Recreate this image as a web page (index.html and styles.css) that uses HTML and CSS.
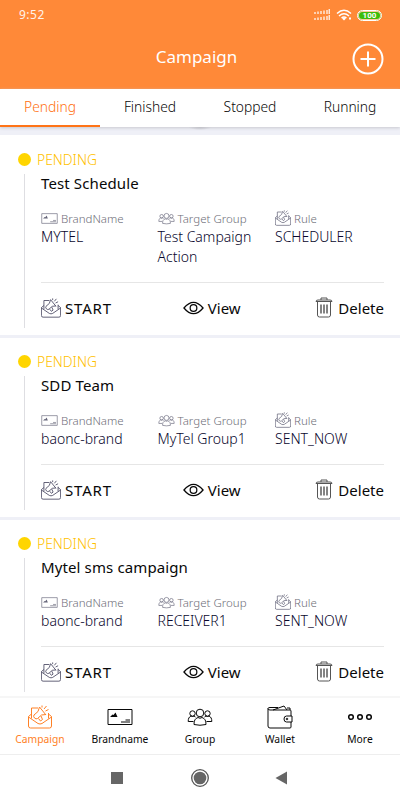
FILE: index.html
```html
<!DOCTYPE html>
<html lang="en">
<head>
<meta charset="utf-8">
<title>Campaign</title>
<link rel="stylesheet" href="styles.css">
</head>
<body>
<svg class="defs" aria-hidden="true">
  <symbol id="mail" viewBox="0 0 24 24"><path d="M3.500 9 .5 11.500V21q0 2 2 2h19q2 0 2-2v-9.500l-3-2.500M.5 12l9.500 6.500q2 1 4 0l9.500-6.500M3.500 13.500V3H10M20.500 13.500V8M11.500 2l6.500 8M11.500 2 10 6.500 6 10q-1 1.500.5 3t3 .5l4-3.500 4.500-.5M10.500 13.500l2 2.500 2-1.500-1.500-3.500M14 2.500V.5M16 4l2.500-3M17.500 6l3-1.500"/></symbol>
  <symbol id="brand" viewBox="0 0 26 17"><path d="M1 1h24v15H1zM14 13.500h9M18.500 11.500H23"/><path class="fill" d="m3 8.500 2.500-2.500 1 .5L8.500 4l2 4.500z"/></symbol>
  <symbol id="group" viewBox="0 0 26 20"><circle cx="13" cy="6" r="3.800"/><circle cx="5.500" cy="6.500" r="2.700"/><circle cx="20.500" cy="6.500" r="2.700"/><path d="M7 17.500c0-4 1-6 4-7q2 1.500 4 0c3 1 4 3 4 7q-6 1.500-12 0zM6.500 14.500H1.200c0-3 .8-4.500 2.800-5.500q1.500 1 3 0l1.500 1M19.500 14.500h5.300c0-3-.8-4.500-2.800-5.500q-1.500 1-3 0l-1.500 1"/></symbol>
  <symbol id="eye" viewBox="0 0 22 14"><path d="M1 7Q11-5 21 7 11 19 1 7z"/><circle cx="11" cy="7" r="3.500"/></symbol>
  <symbol id="trash" viewBox="0 0 18 21"><path class="can" d="M1 4.500Q1 3 3 3h12q2 0 2 1.500zM6 3V1h6v2M2.500 5v13q0 2 2 2h9q2 0 2-2V5"/><path d="M6 7.500v9M9 7.500v9M12 7.500v9"/></symbol>
  <symbol id="wallet" viewBox="0 0 26 24"><path d="M24 11V6q0-1-1-1H3Q1 5 1 3.500V21q0 2 2 2h20q1 0 1-1v-5M1 3.500Q1 2.500 3 2.500h8M6 5l11-4 3 4M20 3h3v2M25 11h-5.500q-2.500 0-2.500 3t2.500 3H25z"/><circle cx="20" cy="14" r=".8"/></symbol>
</svg>

<header class="header">
  <div class="status-bar">
    <span class="clock">9:52</span>
    <svg class="signal" viewBox="0 0 16 12"><path d="M1 3v2M4 2.500v2.500M7 2v3M10 1.500v3.500M13 1v4M15.300 0v5M1 9v2M4 8.500v2.500M7 8v3M10 7.500v3.500M13 7v4M15.300 6v5"/></svg>
    <svg class="wifi" viewBox="0 0 16 12"><path d="M1 4.500Q8-2 15 4.500M3 7q5-4.500 10 0M5.500 9q2.500-2 5 0"/><path class="fill" d="m6 9.500 2 2 2-2-2-1zM13 8.500h2v2h-2z"/></svg>
    <span class="battery">100</span>
  </div>
  <h1 class="title">Campaign</h1>
  <button class="add" aria-label="Add"><svg viewBox="0 0 32 32"><circle cx="16" cy="16" r="14.500"/><path d="M8.500 16h15M16 8.500v15"/></svg></button>
</header>

<nav class="tabs">
  <a class="tab active"><span>Pending</span></a>
  <a class="tab"><span>Finished</span></a>
  <a class="tab"><span>Stopped</span></a>
  <a class="tab"><span>Running</span></a>
</nav>

<main class="list">
  <article class="card">
    <div class="state"><i class="dot"></i>PENDING</div>
    <div class="body">
      <h2 class="name">Test Schedule</h2>
      <div class="fields">
        <div><div class="label"><svg class="i-brand"><use href="#brand"/></svg>BrandName</div><div class="value">MYTEL</div></div>
        <div><div class="label"><svg class="i-group"><use href="#group"/></svg>Target Group</div><div class="value">Test Campaign Action</div></div>
        <div><div class="label"><svg class="i-mail"><use href="#mail"/></svg>Rule</div><div class="value">SCHEDULER</div></div>
      </div>
      <div class="actions">
        <a class="start"><svg class="a-mail"><use href="#mail"/></svg>START</a>
        <a><svg class="a-eye"><use href="#eye"/></svg>View</a>
        <a><svg class="a-trash"><use href="#trash"/></svg>Delete</a>
      </div>
    </div>
  </article>
  <article class="card">
    <div class="state"><i class="dot"></i>PENDING</div>
    <div class="body">
      <h2 class="name">SDD Team</h2>
      <div class="fields">
        <div><div class="label"><svg class="i-brand"><use href="#brand"/></svg>BrandName</div><div class="value">baonc-brand</div></div>
        <div><div class="label"><svg class="i-group"><use href="#group"/></svg>Target Group</div><div class="value">MyTel Group1</div></div>
        <div><div class="label"><svg class="i-mail"><use href="#mail"/></svg>Rule</div><div class="value">SENT_NOW</div></div>
      </div>
      <div class="actions">
        <a class="start"><svg class="a-mail"><use href="#mail"/></svg>START</a>
        <a><svg class="a-eye"><use href="#eye"/></svg>View</a>
        <a><svg class="a-trash"><use href="#trash"/></svg>Delete</a>
      </div>
    </div>
  </article>
  <article class="card">
    <div class="state"><i class="dot"></i>PENDING</div>
    <div class="body">
      <h2 class="name">Mytel sms campaign</h2>
      <div class="fields">
        <div><div class="label"><svg class="i-brand"><use href="#brand"/></svg>BrandName</div><div class="value">baonc-brand</div></div>
        <div><div class="label"><svg class="i-group"><use href="#group"/></svg>Target Group</div><div class="value">RECEIVER1</div></div>
        <div><div class="label"><svg class="i-mail"><use href="#mail"/></svg>Rule</div><div class="value">SENT_NOW</div></div>
      </div>
      <div class="actions">
        <a class="start"><svg class="a-mail"><use href="#mail"/></svg>START</a>
        <a><svg class="a-eye"><use href="#eye"/></svg>View</a>
        <a><svg class="a-trash"><use href="#trash"/></svg>Delete</a>
      </div>
    </div>
  </article>
</main>

<nav class="tabbar">
  <a class="active"><svg class="t-mail"><use href="#mail"/></svg><span>Campaign</span></a>
  <a><svg class="t-brand"><use href="#brand"/></svg><span>Brandname</span></a>
  <a><svg class="t-group"><use href="#group"/></svg><span>Group</span></a>
  <a><svg class="t-wallet"><use href="#wallet"/></svg><span>Wallet</span></a>
  <a><svg class="t-more" viewBox="0 0 26 24"><circle cx="4" cy="12" r="2.300"/><circle cx="13" cy="12" r="2.300"/><circle cx="22" cy="12" r="2.300"/></svg><span>More</span></a>
</nav>
<footer class="system">
  <i></i>
  <svg viewBox="0 0 20 20"><path d="M4 4h12v12H4z"/></svg>
  <svg viewBox="0 0 20 20"><circle class="ring" cx="10" cy="10" r="8.300"/><circle cx="10" cy="10" r="6.300"/></svg>
  <svg viewBox="0 0 20 20"><path d="M15 3.500v13L3.500 10z"/></svg>
  <i></i>
</footer>
</body>
</html>
```

FILE: styles.css
```css
* { box-sizing: border-box; }
body {
  margin: 0;
  height: 800px;
  overflow: hidden;
  display: flex;
  flex-direction: column;
  background: #fff;
  color: #080808;
  font-family: "Noto Sans", "DejaVu Sans", sans-serif;
  font-weight: 300;
}
svg { fill: none; stroke: currentColor; flex: none; }
.defs { position: absolute; width: 0; height: 0; }
.fill { fill: currentColor; stroke: none; }

.header {
  height: 89px;
  flex: none;
  background: #ff8938;
  color: #fff;
  display: grid;
  grid-template: 30px 59px / 60px 1fr 60px;
}
.status-bar {
  grid-column: 1 / 4;
  display: flex;
  align-items: center;
  padding: 0 18px 0 19px;
}
.clock { font-size: 12px; line-height: 16px; font-weight: 400; letter-spacing: .5px; margin-right: auto; opacity: .9; }
.signal { width: 16px; height: 12px; stroke-width: 1.5; opacity: .8; }
.wifi { width: 16px; height: 12px; stroke-width: 1.5; margin: 0 5px 0 6px; }
.battery {
  width: 25px;
  height: 11px;
  border: 1px solid #fff;
  border-radius: 6px;
  background: #3bbd0b;
  font: 700 8px/9px Roboto, sans-serif;
  text-align: center;
  box-shadow: inset 0 0 0 1px #ffc89f;
}
.title {
  grid-column: 2;
  margin: 0 7px 0 0;
  text-align: center;
  font-size: 17px;
  line-height: 53px;
  font-weight: 400;
}
.add {
  display: flex;
  justify-content: flex-end;
  align-items: flex-start;
  padding: 13px 16px 0 0;
  border: 0;
  background: none;
  color: #fff;
}
.add svg { width: 32px; height: 32px; stroke-width: 2; }

.tabs { display: flex; flex: none; height: 38px; background: #fff; box-shadow: 0 1px 3px #c8c8cf; z-index: 1; }
.tab { flex: 1; text-align: center; font-size: 13.8px; line-height: 35px; height: 38px; }
.tab.active { color: #ff7010; border-bottom: 2px solid #ff7417; }

.list {
  flex: 1;
  min-height: 0;
  overflow: hidden;
  background: radial-gradient(ellipse 12px 3px at 50% 0, #b4b4bb, transparent) no-repeat #eff0f7;
  padding-top: 8px;
}
.card { background: #fff; padding: 13px 16px 7px 24px; margin-bottom: 3px; }
.card:first-child { padding-top: 14px; }
.state {
  display: flex;
  align-items: center;
  height: 20px;
  margin: 0 0 5px -6px;
  color: #ffbf00;
  font-size: 13.8px;
}
.dot { width: 13px; height: 13px; border-radius: 50%; background: #ffd500; margin-right: 6px; }
.body { border-left: 1px solid #dedee2; padding-left: 16px; }
.name { margin: 0 0 17px; font-size: 15px; line-height: 19px; font-weight: 400; letter-spacing: .12px; }
.fields { display: grid; grid-template-columns: 116.5px 117.5px 109px; padding-bottom: 15px; }
.label { display: flex; align-items: center; height: 16px; margin-bottom: 1px; font-size: 11.5px; color: #6e6e78; white-space: nowrap; }
.label svg { margin-right: 3px; color: #66667a; }
.value { font-size: 14px; line-height: 20px; color: #08062c; }
.i-brand { width: 17px; height: 11px; }
.i-group { width: 17px; height: 13px; }
.i-mail { width: 16px; height: 16px; stroke-width: 1.1; }
.actions {
  display: flex;
  justify-content: space-between;
  border-top: 1px solid #e6e6e6;
  padding-top: 4px;
  height: 46px;
  font-size: 15px;
  font-weight: 400;
}
.actions a { display: flex; align-items: center; gap: 4px; }
.actions .start { width: 71px; letter-spacing: .8px; margin-right: -4px; }
.a-mail { width: 20px; height: 20px; color: #45435e; }
.a-eye { width: 21px; height: 14px; stroke-width: 1.300; }
.a-trash { width: 18px; height: 21px; margin-right: 1px; }
.can { stroke: #555; }

.tabbar {
  flex: none;
  height: 58px;
  display: flex;
  border-top: 2px solid #f6f6f6;
}
.tabbar a {
  flex: 1;
  display: flex;
  flex-direction: column;
  align-items: center;
  padding-top: 7px;
  font-size: 10.300px;
  line-height: 18px;
  font-weight: 400;
}
.tabbar a.active { color: #ff8126; }
.tabbar svg { height: 24px; }
.tabbar span { margin-top: 1px; }
.t-mail { width: 24px; }
.t-brand, .t-group, .t-wallet, .t-more { width: 26px; }
.t-more { stroke-width: 1.500; }

.system {
  flex: none;
  height: 46px;
  border-top: 1px solid #eee;
  display: grid;
  grid-template-columns: 76px 82px 84px 80px 78px;
  place-items: center;
}
.system svg { width: 20px; height: 20px; fill: #666; stroke: none; }
.system .ring { fill: none; stroke: #555; stroke-width: 1.300; }
```
